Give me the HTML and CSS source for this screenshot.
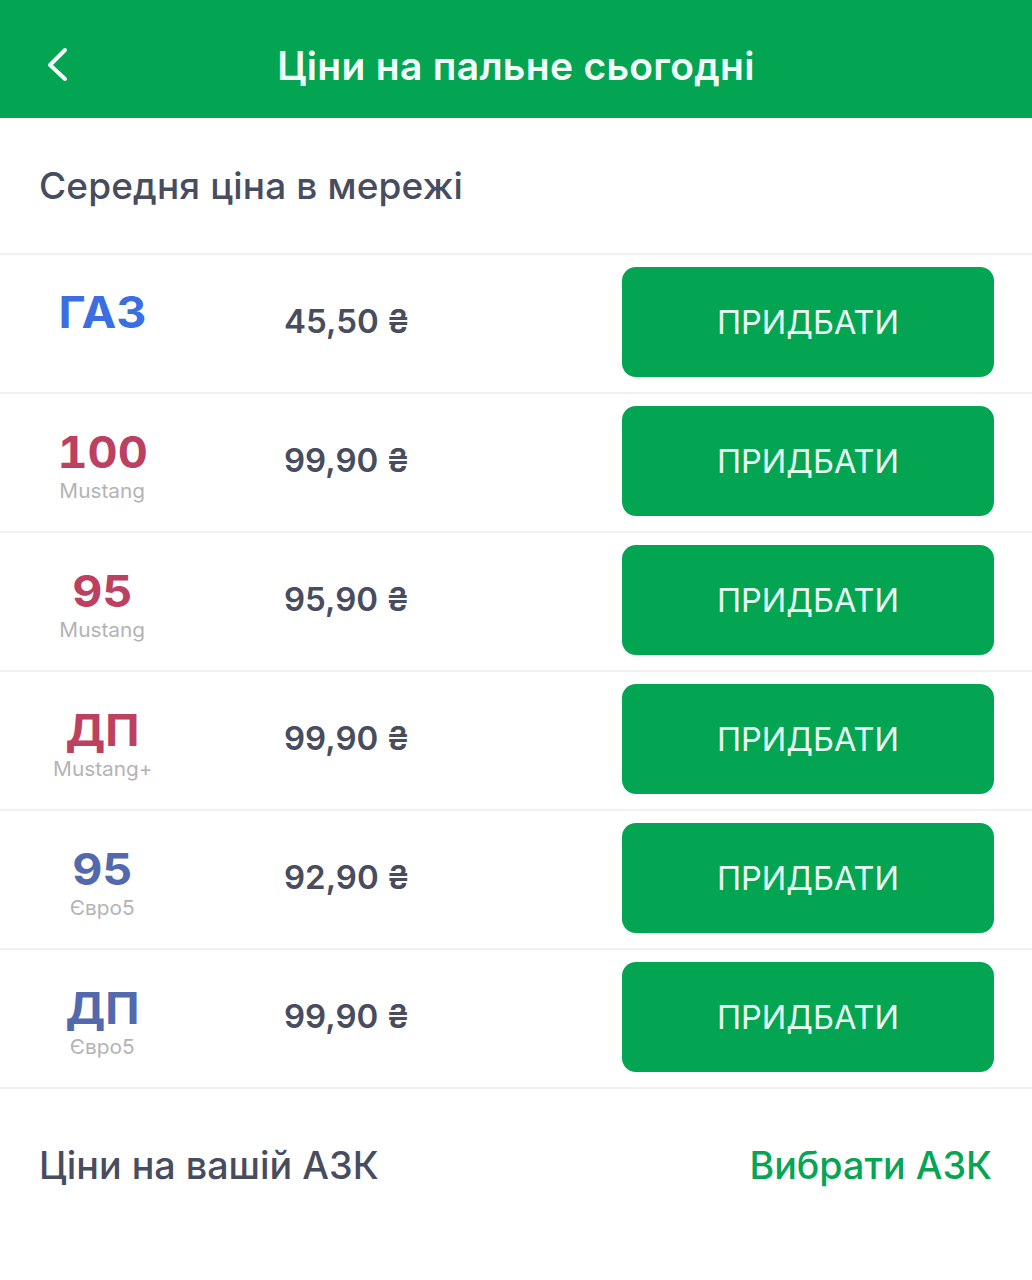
FILE: index.html
```html
<!DOCTYPE html>
<html lang="uk">
<head>
    <meta charset="UTF-8">
    <title>Ціни на пальне сьогодні</title>
    <link rel="stylesheet" href="styles.css">
</head>
<body>
    <header class="topbar">
        <svg class="back-icon" width="24" height="38" viewBox="0 0 24 38" fill="none">
            <path d="M19 4 L4 19 L19 33" stroke="#f2fff8" stroke-width="4" stroke-linecap="round" stroke-linejoin="round"/>
        </svg>
        <h1>Ціни на пальне сьогодні</h1>
    </header>

    <h2 class="section-title">Середня ціна в мережі</h2>

    <div class="fuel-list">
        <div class="fuel-row">
            <div class="fuel-name fuel-name-solo"><span class="grade gas">ГАЗ</span></div>
            <div class="price">45,50 <span class="currency">₴</span></div>
            <button class="buy-btn">ПРИДБАТИ</button>
        </div>
        <div class="fuel-row">
            <div class="fuel-name"><span class="grade premium">100</span><span class="brand">Mustang</span></div>
            <div class="price">99,90 <span class="currency">₴</span></div>
            <button class="buy-btn">ПРИДБАТИ</button>
        </div>
        <div class="fuel-row">
            <div class="fuel-name"><span class="grade premium">95</span><span class="brand">Mustang</span></div>
            <div class="price">95,90 <span class="currency">₴</span></div>
            <button class="buy-btn">ПРИДБАТИ</button>
        </div>
        <div class="fuel-row">
            <div class="fuel-name"><span class="grade diesel premium">ДП</span><span class="brand">Mustang+</span></div>
            <div class="price">99,90 <span class="currency">₴</span></div>
            <button class="buy-btn">ПРИДБАТИ</button>
        </div>
        <div class="fuel-row">
            <div class="fuel-name"><span class="grade euro">95</span><span class="brand">Євро5</span></div>
            <div class="price">92,90 <span class="currency">₴</span></div>
            <button class="buy-btn">ПРИДБАТИ</button>
        </div>
        <div class="fuel-row">
            <div class="fuel-name"><span class="grade diesel euro">ДП</span><span class="brand">Євро5</span></div>
            <div class="price">99,90 <span class="currency">₴</span></div>
            <button class="buy-btn">ПРИДБАТИ</button>
        </div>
    </div>

    <div class="station-row">
        <span class="station-label">Ціни на вашій АЗК</span>
        <a class="station-link">Вибрати АЗК</a>
    </div>
</body>
</html>
```

FILE: styles.css
```css
body {
    font-family: Inter, "Noto Sans", sans-serif;
    background: #fff;
    color: #474c5e;
    margin: 0;
    padding: 0;
    min-height: 1280px;
}
.topbar {
    height: 118px;
    box-sizing: border-box;
    padding-top: 13px;
    background: #03a552;
    display: flex;
    align-items: center;
    justify-content: center;
    position: relative;
}
.back-icon {
    position: absolute;
    left: 46px;
    top: 46px;
}
h1 {
    margin: 0;
    color: #f2fff8;
    font-size: 39px;
    font-weight: 600;
    line-height: 44px;
    letter-spacing: 0.3px;
}
.section-title {
    margin: 0;
    height: 135px;
    box-sizing: border-box;
    padding: 46px 0 0 39px;
    font-size: 37px;
    line-height: 44px;
    font-weight: 500;
    letter-spacing: 0.15px;
}
.fuel-list {
    border-top: 2px solid #f1f1f1;
}
.fuel-row {
    height: 139px;
    box-sizing: border-box;
    border-bottom: 2px solid #f1f1f1;
    display: flex;
    align-items: center;
    padding: 0 38px 4px 0;
}
.fuel-name {
    width: 205px;
    display: flex;
    flex-direction: column;
    align-items: center;
    padding-top: 11px;
    box-sizing: border-box;
}
.fuel-name-solo {
    padding-top: 0;
    padding-bottom: 20px;
}
.grade {
    font-size: 44px;
    line-height: 44px;
    font-weight: 700;
    font-variant-numeric: tabular-nums;
    transform: scaleX(1.06);
}
.grade.diesel {
    transform: scaleX(1.04);
}
.gas { color: #3b6ee0; }
.premium { color: #bc405f; }
.euro { color: #5369ad; }
.brand {
    margin-top: 5px;
    font-size: 20px;
    line-height: 24px;
    color: #b3b3b6;
    transform: scaleX(1.04);
}
.price {
    margin-left: 79px;
    flex: 1;
    font-size: 33px;
    font-weight: 600;
    line-height: 40px;
}
.currency {
    font-size: 32px;
}
.buy-btn {
    width: 372px;
    height: 110px;
    background: #03a552;
    color: #e9fff3;
    border: none;
    border-radius: 14px;
    font-family: inherit;
    font-size: 32.500px;
    font-weight: 400;
    padding: 2px 0 0;
    cursor: pointer;
}
.station-row {
    display: flex;
    justify-content: space-between;
    padding: 53px 40px 0 39px;
    font-size: 37.700px;
    line-height: 46px;
    font-weight: 500;
}
.station-link {
    color: #06a556;
}
```
